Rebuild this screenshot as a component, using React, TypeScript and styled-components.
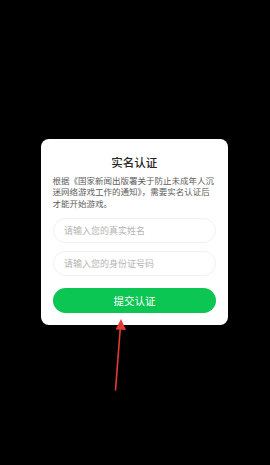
import React from "react";
import styled, { createGlobalStyle } from "styled-components";

const GlobalStyle = createGlobalStyle`
  html, body {
    margin: 0;
    padding: 0;
    background: #000;
  }
  body {
    font-family: "Noto Sans CJK SC", "Noto Sans", sans-serif;
  }
`;

const Screen = styled.div`
  position: relative;
  width: 270px;
  height: 465px;
  background: #000;
  padding-top: 139px;
  box-sizing: border-box;
`;

const Dialog = styled.div`
  width: 187px;
  margin-left: 41px;
  box-sizing: border-box;
  padding: 14px 12px 12px 11.5px;
  background: #fff;
  border-radius: 8px;
  display: flex;
  flex-direction: column;
`;

const Title = styled.div`
  font-size: 11.5px;
  line-height: 18px;
  font-weight: 500;
  color: #262626;
  text-align: center;
`;

const Notice = styled.p`
  margin: 4px 0 0;
  font-size: 8.5px;
  line-height: 11.4px;
  color: #5e5e5e;
`;

const Field = styled.input`
  height: 25px;
  margin: ${(p: { $gap: number }) => p.$gap}px 0 0 0.5px;
  padding: 0 10px;
  box-sizing: border-box;
  border: 1px solid #f1f1f1;
  border-radius: 13px;
  outline: none;
  font-family: inherit;
  font-size: 9px;
  color: #333;
  background: #fff;
  &::placeholder {
    color: #b4b4b4;
  }
`;

const SubmitButton = styled.button`
  height: 25px;
  margin: 12px 0 0 0.5px;
  border: none;
  border-radius: 13px;
  background: #0cc653;
  color: #fff;
  font-family: inherit;
  font-size: 10.5px;
  cursor: pointer;
`;

const Arrow = styled.svg`
  position: absolute;
  left: 0;
  top: 0;
  pointer-events: none;
`;

export default function App() {
  return (
    <>
      <GlobalStyle />
      <Screen>
        <Dialog>
          <Title>实名认证</Title>
          <Notice>
            根据《国家新闻出版署关于防止未成年人沉迷网络游戏工作的通知》，需要实名认证后才能开始游戏。
          </Notice>
          <Field $gap={9} placeholder="请输入您的真实姓名" />
          <Field $gap={8} placeholder="请输入您的身份证号码" />
          <SubmitButton>提交认证</SubmitButton>
        </Dialog>
        <Arrow width="270" height="465" viewBox="0 0 270 465">
          <line x1="115.5" y1="390.5" x2="120.3" y2="328" stroke="#e53935" strokeWidth="1.6" />
          <polygon points="121,319 126,330 115.6,329.4" fill="#e53935" />
        </Arrow>
      </Screen>
    </>
  );
}
